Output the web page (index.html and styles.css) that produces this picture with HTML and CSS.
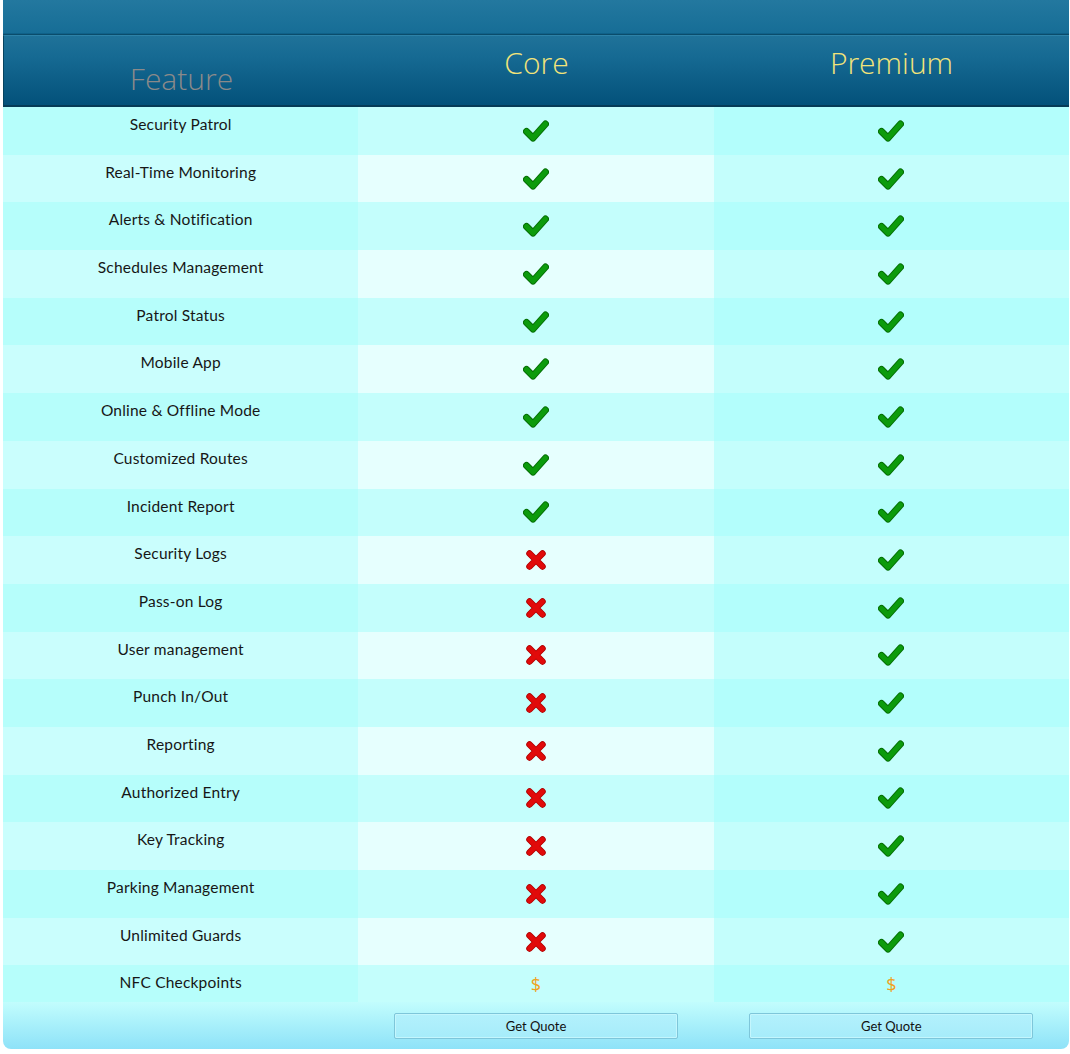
FILE: index.html
```html
<!DOCTYPE html>
<html>
<head>
<meta charset="utf-8">
<link rel="stylesheet" href="styles.css">
</head>
<body>
<div class="wrap">
  <div class="table">
    <div class="topbar"></div>
    <div class="head">
      <div class="hcell feature">Feature</div>
      <div class="hcell plan">Core</div>
      <div class="hcell plan">Premium</div>
    </div>
    <div id="rows"></div>
    <div class="row nfc odd">
      <div class="cell name">NFC Checkpoints</div>
      <div class="cell core"><span class="dollar">$</span></div>
      <div class="cell prem"><span class="dollar">$</span></div>
    </div>
    <div class="foot">
      <div class="fcell"></div>
      <div class="fcell"><button class="btn">Get Quote</button></div>
      <div class="fcell"><button class="btn">Get Quote</button></div>
    </div>
  </div>
</div>
<script src="script.js"></script>
</body>
</html>
```
FILE: styles.css
```css
html, body { margin: 0; padding: 0; background: #ffffff; }
.wrap { padding-left: 3px; }
.table { width: 1066px; font-family: "Lato", "Open Sans", sans-serif; }
.topbar {
  height: 34px;
  background: linear-gradient(#23789f, #166d96);
  border-bottom: 1px solid #0a4c6b;
  box-shadow: inset 0 -1px 0 #0f6189;
}
.head {
  display: grid;
  grid-template-columns: repeat(3, 1fr);
  height: 69px;
  background: linear-gradient(#1f7299, #166a93 30%, #03517a);
  border-top: 1px solid #2d82a8;
  border-bottom: 2px solid #063b57;
  border-left: 1px solid #06435f;
  box-sizing: content-box;
}
.hcell {
  display: flex;
  justify-content: center;
  font-family: "Open Sans", sans-serif;
  font-weight: 300;
  font-size: 30px;
}
.hcell.feature { align-items: flex-end; padding-bottom: 6px; color: #8a8a8a; }
.hcell.plan { align-items: center; padding-bottom: 16px; color: #f2e47a; }
.row {
  display: grid;
  grid-template-columns: repeat(3, 1fr);
  height: 47.7px;
}
.cell { display: flex; justify-content: center; align-items: center; }
.cell.name {
  align-items: flex-start;
  padding-top: 8px;
  font-size: 15.5px;
  color: #161616;
  letter-spacing: 0.2px;
}
.row.odd .name { background: #b6fefb; }
.row.odd .core { background: #c4fefc; }
.row.odd .prem { background: #b3fefc; }
.row.even .name { background: #cafefd; }
.row.even .core { background: #e6fffe; }
.row.even .prem { background: #c4fefc; }
.row.nfc { height: 37px; }
.row.nfc .name { padding-top: 8px; }
.icon { display: block; }
.dollar { color: #f0a21e; font-size: 18px; font-family: "Open Sans", sans-serif; }
.foot {
  display: grid;
  grid-template-columns: repeat(3, 1fr);
  height: 47px;
  background: linear-gradient(#c2fdfd, #aaf1fb 45%, #8ee2f8);
  border-radius: 0 0 8px 8px;
}
.fcell { display: flex; justify-content: center; padding-top: 11px; }
.btn {
  width: 284px;
  height: 26px;
  background: linear-gradient(#b3f1fc, #a6ecfa);
  border: 1px solid #7ec6da;
  border-radius: 2px;
  font-family: "Lato", sans-serif;
  font-size: 13px;
  color: #111;
  padding: 0;
  box-shadow: inset 0 0 0 1px #c4f6fd;
}
```
FILE: script.js
```js
var features = [
  ["Security Patrol", 1],
  ["Real-Time Monitoring", 1],
  ["Alerts & Notification", 1],
  ["Schedules Management", 1],
  ["Patrol Status", 1],
  ["Mobile App", 1],
  ["Online & Offline Mode", 1],
  ["Customized Routes", 1],
  ["Incident Report", 1],
  ["Security Logs", 0],
  ["Pass-on Log", 0],
  ["User management", 0],
  ["Punch In/Out", 0],
  ["Reporting", 0],
  ["Authorized Entry", 0],
  ["Key Tracking", 0],
  ["Parking Management", 0],
  ["Unlimited Guards", 0]
];
var check = '<svg class="icon" width="26" height="22" viewBox="0 0 26 22"><path d="M3.5 11.5 L10 18 L22.5 4" fill="none" stroke="#056e05" stroke-width="7" stroke-linecap="round" stroke-linejoin="round"/><path d="M3.5 11.5 L10 18 L22.5 4" fill="none" stroke="#0c9b0c" stroke-width="5" stroke-linecap="round" stroke-linejoin="round"/></svg>';
var cross = '<svg class="icon" width="22" height="22" viewBox="0 0 22 22"><path d="M4.5 4.5 L17.5 17.5 M17.5 4.5 L4.5 17.5" fill="none" stroke="#b00000" stroke-width="6.5" stroke-linecap="round"/><path d="M4.5 4.5 L17.5 17.5 M17.5 4.5 L4.5 17.5" fill="none" stroke="#e10a0a" stroke-width="4.8" stroke-linecap="round"/></svg>';
var html = '';
features.forEach(function (f, i) {
  var cls = i % 2 === 0 ? 'odd' : 'even';
  html += '<div class="row ' + cls + '">' +
    '<div class="cell name">' + f[0].replace('&', '&amp;') + '</div>' +
    '<div class="cell core">' + (f[1] ? check : cross) + '</div>' +
    '<div class="cell prem">' + check + '</div>' +
    '</div>';
});
document.getElementById('rows').innerHTML = html;
```
